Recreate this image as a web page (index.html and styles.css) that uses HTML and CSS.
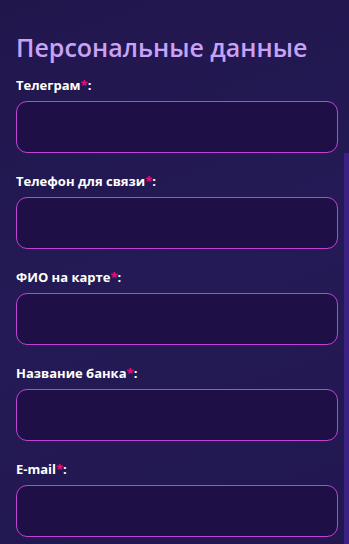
FILE: index.html
```html
<!DOCTYPE html>
<html lang="ru">
<head>
  <meta charset="utf-8">
  <title>Персональные данные</title>
  <link rel="stylesheet" href="styles.css">
</head>

<body>
  <!-- Form -->
  <div class="form">
    <h1>Персональные данные</h1>

    <div class="field">
      <label>Телеграм<span class="req">*</span>:</label>
      <input type="text">
    </div>
    <div class="field">
      <label>Телефон для связи<span class="req">*</span>:</label>
      <input type="text">
    </div>
    <div class="field">
      <label>ФИО на карте<span class="req">*</span>:</label>
      <input type="text">
    </div>
    <div class="field">
      <label>Название банка<span class="req">*</span>:</label>
      <input type="text">
    </div>
    <div class="field">
      <label>E-mail<span class="req">*</span>:</label>
      <input type="text">
    </div>
  </div>

  <div class="scroll-thumb"></div>
</body>
</html>
```

FILE: styles.css
```css
body {
  margin: 0;
  height: 544px;
  overflow: hidden;
  background: linear-gradient(160deg, #21164c 0%, #241a55 50%, #22174f 100%);
  font-family: "Open Sans", "Noto Sans", sans-serif;
  color: white;
}

/* Form */
.form {
  padding: 29px 11px 0 16px;
  display: flex;
  flex-direction: column;
}

.form h1 {
  margin: 0 0 11px 0;
  font-size: 25px;
  font-weight: 600;
  color: #c8a2f6;
  line-height: 36px;
}

.field {
  display: flex;
  flex-direction: column;
  margin-bottom: 19px;
}

.field label {
  font-size: 13px;
  font-weight: 700;
  line-height: 18px;
  margin-bottom: 7px;
}

.field .req {
  color: #e0147a;
}

.field input {
  height: 52px;
  box-sizing: border-box;
  border: 1px solid #bf42d4;
  border-radius: 11px;
  background-color: #1e1046;
  outline: none;
}

/* Scrollbar */
.scroll-thumb {
  position: absolute;
  right: 0;
  top: 153px;
  bottom: 0;
  width: 5px;
  background-color: #3a2282;
}
```
